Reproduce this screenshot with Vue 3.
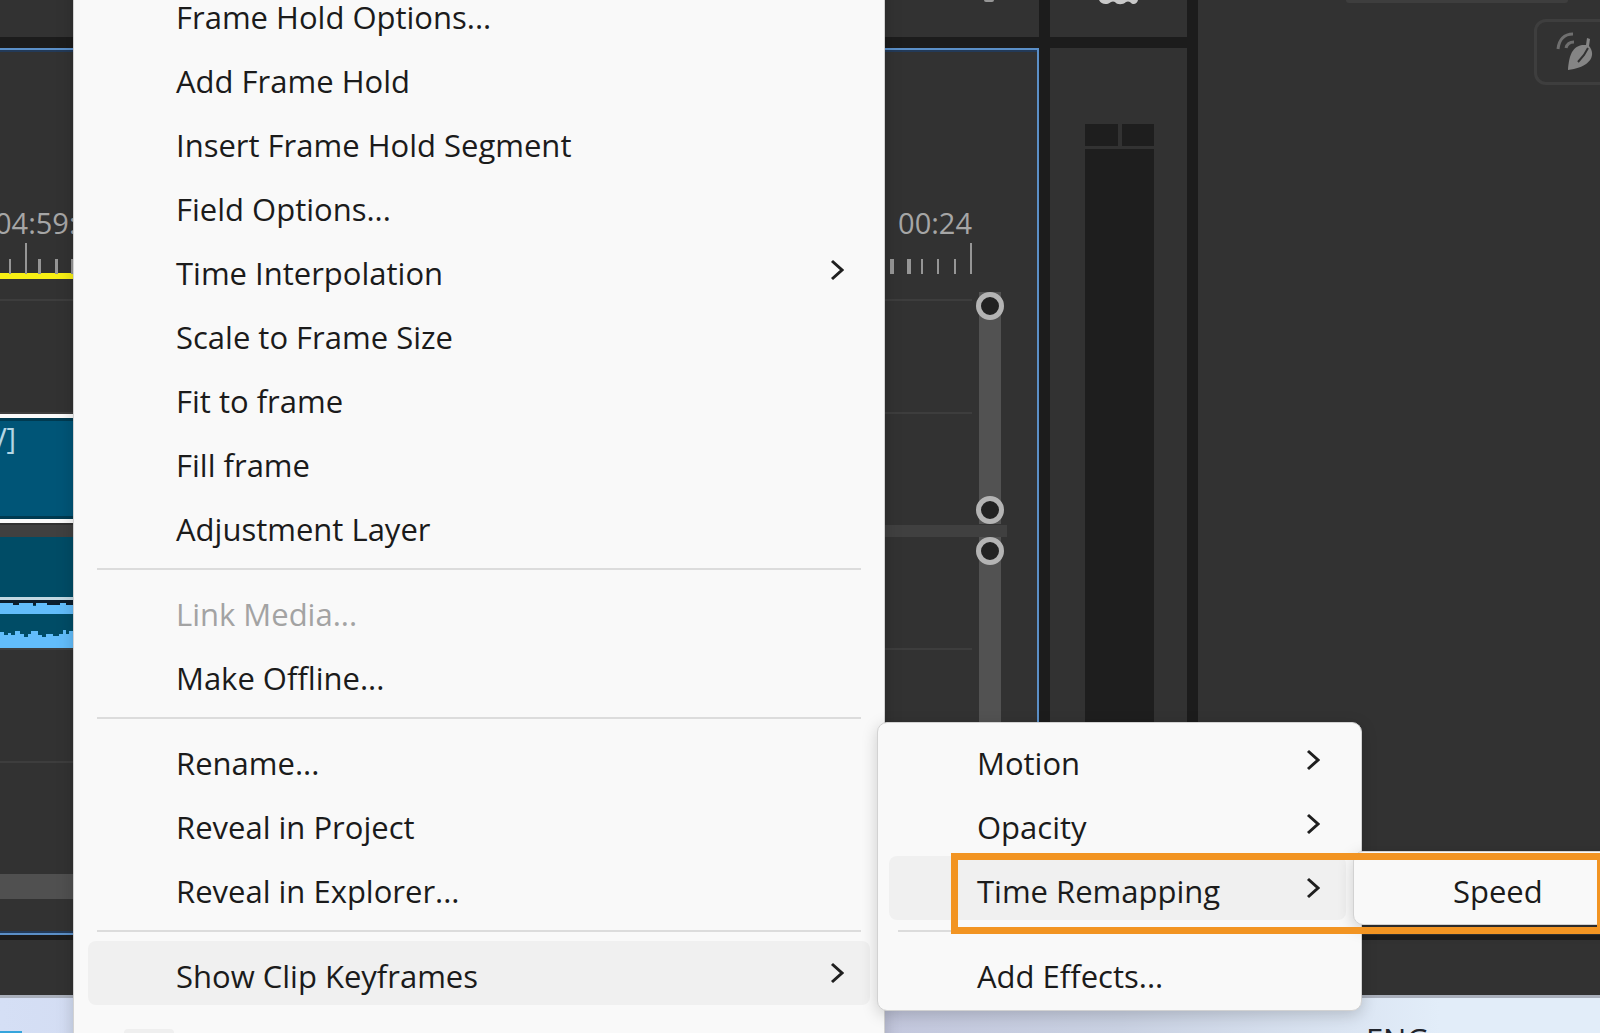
<template>
  <div class="app">
    <main class="workspace">
      <section class="panel top-strip">
        <span class="knob"></span>
      </section>

      <section class="panel top-tools">
        <svg class="hand" width="40" height="5" viewBox="0 0 40 5">
          <path d="M0 0H39C38 5 33 5 31 2Q29 1 27 2C24 5 18 5 16 2Q14 1 12 2C9 5 2 5 0 0Z" fill="#c8c8c8" />
        </svg>
      </section>

      <aside class="panel side">
        <button class="side-field" aria-label="Preset"></button>
        <button class="side-button" aria-label="Eco mode">
          <svg width="40" height="42" viewBox="0 0 40 42" fill="none">
            <path d="M3 18C4 9 9 3 18 3" stroke="#6f6f6f" stroke-width="3" />
            <path d="M11 17C12 13 14 11 19 11" stroke="#6f6f6f" stroke-width="3" />
            <path d="M13 39C14 27 16 16 27 14L31 14L32 7L35 8L34 15C41 23 37 36 13 39Z" fill="#858585" />
            <path d="M33 17L29 24L23 31" stroke="#323232" stroke-width="2" />
          </svg>
        </button>
      </aside>

      <section class="panel timeline">
        <div class="timeline-main">
          <div class="timecodes">
            <span>04:59:</span>
            <span>00:24</span>
          </div>
          <div class="ruler">
            <svg width="74" height="31" viewBox="0 0 74 31">
              <rect v-for="t in leftTicks" :key="t.x" :x="t.x" :y="t.y" :width="t.w" height="31" fill="#969696" />
            </svg>
            <svg width="84" height="31" viewBox="0 0 84 31">
              <rect v-for="t in rightTicks" :key="t.x" :x="t.x" :y="t.y" :width="t.w" height="31" fill="#969696" />
            </svg>
          </div>
          <div class="render-bar"></div>

          <div class="track track-v2"></div>
          <div class="track">
            <div class="clip clip-video">
              <span class="clip-name">[V]</span>
            </div>
          </div>
          <div class="divider"></div>
          <div class="track track-a1">
            <div class="clip clip-audio">
              <svg class="wave" width="80" height="48" viewBox="0 0 80 48">
                <rect width="80" height="5" fill="#0b1d2c" />
                <path d="M0 3H13V5H19V3H33V6H36V3H47V5H60V3H66V5H80V14H0Z" fill="#62bdfb" />
                <path d="M0 32H4V35H8V33H11V35H15V31H20V34H24V37H28V34H31V31H38V35H42V37H46V34H53V36H59V34H63V30H66V34H69V31H80V48H0Z" fill="#62bdfb" />
              </svg>
            </div>
          </div>
          <div class="track"></div>
          <div class="track track-last"></div>
          <div class="h-scroll"></div>
        </div>

        <div class="timeline-zoom">
          <div class="v-scroll">
            <span class="ring"></span>
            <span class="ring"></span>
          </div>
          <div class="v-scroll">
            <span class="ring"></span>
            <span class="ring"></span>
          </div>
        </div>
      </section>

      <section class="panel meters">
        <div class="peaks">
          <span></span>
          <span></span>
        </div>
        <div class="level"></div>
      </section>

      <footer class="panel status"></footer>
    </main>

    <div class="taskbar">
      <span class="task-icon"></span>
      <span class="lang">ENG</span>
    </div>

    <nav
      v-for="menu in menus"
      :key="menu.name"
      class="menu"
      :class="'menu-' + menu.name"
      role="menu"
    >
      <template v-for="(item, i) in menu.items" :key="i">
        <hr v-if="item.separator" class="menu-separator" />
        <button
          v-else
          class="menu-item"
          :class="{ active: item.label === active[menu.name] }"
          role="menuitem"
          :disabled="item.disabled"
          @mouseenter="active[menu.name] = item.label"
        >
          <span class="menu-label">{{ item.label }}</span>
          <svg v-if="item.sub" class="chevron" width="14" height="22" viewBox="0 0 14 22">
            <path d="M2 2L12 11L2 20" fill="none" stroke="#1f1f1f" stroke-width="3" />
          </svg>
        </button>
      </template>
      <span v-if="menu.name === 'clip'" class="menu-check"></span>
    </nav>

    <div class="callout"></div>
  </div>
</template>

<script setup>
import { reactive } from 'vue';

const active = reactive({
  clip: 'Show Clip Keyframes',
  keyframes: 'Time Remapping',
  remap: '',
});

const menus = [
  {
    name: 'clip',
    items: [
      { label: 'Frame Hold Options...' },
      { label: 'Add Frame Hold' },
      { label: 'Insert Frame Hold Segment' },
      { label: 'Field Options...' },
      { label: 'Time Interpolation', sub: true },
      { label: 'Scale to Frame Size' },
      { label: 'Fit to frame' },
      { label: 'Fill frame' },
      { label: 'Adjustment Layer' },
      { separator: true },
      { label: 'Link Media...', disabled: true },
      { label: 'Make Offline...' },
      { separator: true },
      { label: 'Rename...' },
      { label: 'Reveal in Project' },
      { label: 'Reveal in Explorer...' },
      { separator: true },
      { label: 'Show Clip Keyframes', sub: true },
    ],
  },
  {
    name: 'keyframes',
    items: [
      { label: 'Motion', sub: true },
      { label: 'Opacity', sub: true },
      { label: 'Time Remapping', sub: true },
      { separator: true },
      { label: 'Add Effects...' },
    ],
  },
  {
    name: 'remap',
    items: [{ label: 'Speed' }],
  },
];

// Ruler ticks, the tall ones mark a labelled timecode
const leftTicks = [
  { x: 9, y: 16, w: 2 },
  { x: 25, y: 0, w: 2 },
  { x: 38, y: 16, w: 3 },
  { x: 55, y: 16, w: 3 },
  { x: 71, y: 16, w: 3 },
];

const rightTicks = [
  { x: 2, y: 16, w: 4 },
  { x: 19, y: 16, w: 4 },
  { x: 33, y: 16, w: 2 },
  { x: 49, y: 16, w: 2 },
  { x: 66, y: 16, w: 2 },
  { x: 82, y: 0, w: 2 },
];
</script>

<style>
body {
  background: #323232;
}
</style>

<style scoped>
.app {
  position: relative;
  display: flex;
  flex-direction: column;
  height: 100vh;
  overflow: hidden;
  font-family: "Open Sans", "Noto Sans", sans-serif;
}

.app * {
  box-sizing: border-box;
}

.workspace {
  flex: 1;
  min-height: 0;
  display: grid;
  grid-template-columns: minmax(0, 1fr) 137px 402px;
  grid-template-rows: 37px minmax(0, 1fr) 55px;
  column-gap: 11px;
  background: #1c1c1c;
}

.panel {
  background: #323232;
}

.top-strip {
  display: flex;
  justify-content: flex-end;
  padding-right: 45px;
}

.knob {
  width: 10px;
  height: 2px;
  background: #969696;
  border-radius: 0 0 5px 5px;
}

.top-tools {
  display: flex;
  justify-content: center;
}

.side {
  grid-column: 3;
  grid-row: 1 / 3;
  display: flex;
  flex-direction: column;
  align-items: flex-end;
  gap: 16px;
  margin-bottom: 5px;
  overflow: hidden;
}

.side-field {
  width: 222px;
  height: 3px;
  margin-right: 32px;
  padding: 0;
  background: #3e3e3e;
  border: 0;
  border-radius: 0 0 8px 8px;
}

.side-button {
  width: 82px;
  height: 66px;
  margin-right: -16px;
  padding: 0 0 0 18px;
  display: flex;
  align-items: center;
  background: transparent;
  border: 3px solid #3e3e3e;
  border-radius: 12px;
}

.timeline {
  grid-row: 2;
  margin: 11px 0 5px;
  display: grid;
  grid-template-columns: minmax(0, 1fr) 65px;
  border: 2px solid #5b8fc7;
  border-left: 0;
  overflow: hidden;
  box-shadow: inset 0 2px #233a58, inset 0 -2px #233a58;
}

.timeline-main {
  padding-top: 153px;
}

.timecodes {
  display: flex;
  justify-content: space-between;
  height: 40px;
  margin-left: -5px;
  font-size: 29px;
  font-weight: 500;
  line-height: 40px;
  color: #a6a6a6;
}

.ruler {
  display: flex;
  justify-content: space-between;
  height: 30px;
}

.render-bar {
  width: 50%;
  height: 6px;
  margin-bottom: 20px;
  background: #f8f015;
}

.track {
  height: 113px;
  border-top: 2px solid #3d3d3d;
}

.track-a1 {
  height: 111px;
  border-top: 0;
}

.divider {
  height: 12px;
  margin-right: -35px;
  background: #404040;
}

.clip {
  width: 50%;
}

.clip-video {
  height: 109px;
  background: #005577;
  border: solid #fafafa;
  border-width: 4px 0;
  box-shadow: inset 0 3px #003a50, inset 0 -3px #003a50;
}

.clip-name {
  display: flex;
  justify-content: flex-end;
  width: 16px;
  overflow: hidden;
  font-size: 29px;
  line-height: 40px;
  color: #b4d6e4;
}

.clip-audio {
  height: 111px;
  padding-top: 60px;
  background: #004c66;
}

.wave {
  display: block;
  width: 80px;
  height: 51px;
  border-top: 3px solid #c3d9e3;
}

.h-scroll {
  width: 50%;
  height: 25px;
  background: #505050;
}

.timeline-zoom {
  display: flex;
  flex-direction: column;
  gap: 13px;
  padding: 242px 0 0 4px;
}

.v-scroll {
  display: flex;
  flex-direction: column;
  justify-content: space-between;
  width: 28px;
  height: 232px;
  background: linear-gradient(90deg, transparent 3px, #525252 3px 25px, transparent 25px);
}

.ring {
  height: 28px;
  border: 5px solid #b4b4b4;
  border-radius: 50%;
  background: #222222;
}

.meters {
  grid-row: 2;
  display: flex;
  flex-direction: column;
  gap: 3px;
  margin: 11px 0 5px;
  padding: 76px 33px 0 35px;
}

.peaks {
  display: flex;
  gap: 4px;
}

.peaks span {
  flex: 1;
  height: 22px;
  background: #1e1e1e;
}

.level {
  flex: 1;
  background: #1e1e1e;
}

.status {
  grid-column: 1 / 4;
}

.taskbar {
  display: flex;
  justify-content: space-between;
  height: 38px;
  padding-right: 171px;
  overflow: hidden;
  background: linear-gradient(90deg, #d5dff5 0%, #c3c7dd 55%, #c9d1e2 70%, #e2edf9 90%);
  border-top: 3px solid #a9afbb;
}

.task-icon {
  width: 22px;
  height: 2px;
  margin-top: 33px;
  background: #35a5dc;
}

.lang {
  padding-top: 21px;
  font-size: 31px;
  font-weight: 500;
  line-height: 40px;
  color: #20242c;
}

/* Menus */
.menu {
  position: absolute;
  background: #f9f9f9;
  border: 1px solid #d2d2d2;
  box-shadow: 0 4px 16px rgba(0, 0, 0, 0.18);
}

.menu-clip {
  top: -19px;
  left: 73px;
  width: 812px;
  height: 1100px;
  padding: 0 14px;
}

.menu-keyframes {
  top: 722px;
  left: 877px;
  width: 485px;
  padding: 5px 15px 5px 11px;
  border-radius: 10px;
}

.menu-remap {
  top: 851px;
  left: 1353px;
  width: 300px;
  padding: 4px 11px;
  border-radius: 10px;
}

.menu-item {
  display: flex;
  align-items: center;
  justify-content: space-between;
  width: 100%;
  height: 64px;
  padding: 0 26px 0 88px;
  background: transparent;
  border: 0;
  border-radius: 8px;
  font: inherit;
  font-size: 31px;
  line-height: 40px;
  color: #1b1b1b;
  text-align: left;
  white-space: nowrap;
}

.menu-label {
  padding-top: 6px;
}

.menu-item.active {
  background: #f0f0f0;
}

.menu-item:disabled {
  color: #a3a3a3;
}

.menu-separator {
  height: 2px;
  margin: 10px 9px 9px;
  background: #dcdcdc;
  border: 0;
}

.menu-check {
  display: block;
  width: 50px;
  height: 50px;
  margin: 24px 36px;
  background: #efefef;
  border-radius: 4px;
}

.callout {
  position: absolute;
  top: 853px;
  left: 951px;
  right: 0;
  height: 81px;
  border: 7px solid #f29422;
  border-right-width: 3px;
  pointer-events: none;
}
</style>
